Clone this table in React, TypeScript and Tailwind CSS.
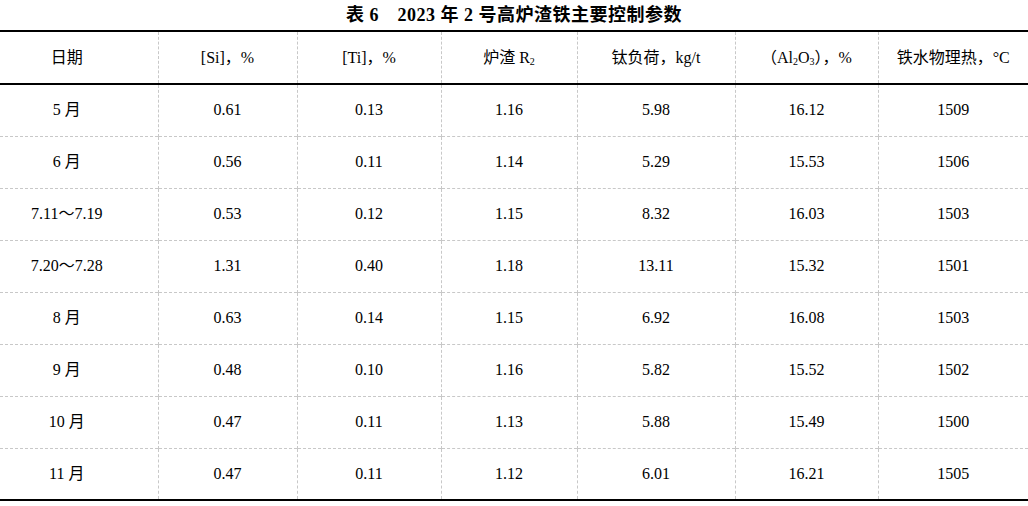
import React from "react";

const cols = ["w-[158px]", "w-[139px]", "w-[144px]", "w-[136px]", "w-[158px]", "w-[143px]", "w-[150px]"];

const rows: string[][] = [
  ["5 月", "0.61", "0.13", "1.16", "5.98", "16.12", "1509"],
  ["6 月", "0.56", "0.11", "1.14", "5.29", "15.53", "1506"],
  ["7.11～7.19", "0.53", "0.12", "1.15", "8.32", "16.03", "1503"],
  ["7.20～7.28", "1.31", "0.40", "1.18", "13.11", "15.32", "1501"],
  ["8 月", "0.63", "0.14", "1.15", "6.92", "16.08", "1503"],
  ["9 月", "0.48", "0.10", "1.16", "5.82", "15.52", "1502"],
  ["10 月", "0.47", "0.11", "1.13", "5.88", "15.49", "1500"],
  ["11 月", "0.47", "0.11", "1.12", "6.01", "16.21", "1505"],
];

const headers: React.ReactNode[] = [
  "日期",
  "[Si]，%",
  "[Ti]，%",
  <>炉渣 R<sub className="text-[10px]">2</sub></>,
  "钛负荷，kg/t",
  <>（Al<sub className="text-[10px]">2</sub>O<sub className="text-[10px]">3</sub>），%</>,
  "铁水物理热，°C",
];

const cell = "text-center align-middle p-0 border-l border-dashed border-l-[#c8c8c8] first:border-l-0";

export default function App() {
  return (
    <div
      className="w-[1028px] h-[506px] bg-white text-black overflow-hidden"
      style={{ fontFamily: '"Liberation Serif", "Noto Sans CJK SC", serif' }}
    >
      <div className="h-[30px] flex items-center justify-center text-[18px] font-bold tracking-[0.5px]">
        表 6　2023 年 2 号高炉渣铁主要控制参数
      </div>
      <table className="w-[1028px] table-fixed border-collapse text-[16px]">
        <colgroup>
          {cols.map((c, i) => (
            <col key={i} className={c} />
          ))}
        </colgroup>
        <thead>
          <tr className="h-[53px] border-t-2 border-b-2 border-black">
            {headers.map((h, i) => (
              <th key={i} className={`${cell} font-normal ${i === 0 ? "pr-[24px]" : ""}`}>
                {h}
              </th>
            ))}
          </tr>
        </thead>
        <tbody>
          {rows.map((r, ri) => (
            <tr
              key={ri}
              className={`h-[52px] ${ri === rows.length - 1 ? "border-b-2 border-black" : "border-b border-dashed border-b-[#c8c8c8]"}`}
            >
              {r.map((v, i) => (
                <td key={i} className={`${cell} ${i === 0 ? "pr-[24px]" : ""}`}>
                  {v}
                </td>
              ))}
            </tr>
          ))}
        </tbody>
      </table>
    </div>
  );
}
